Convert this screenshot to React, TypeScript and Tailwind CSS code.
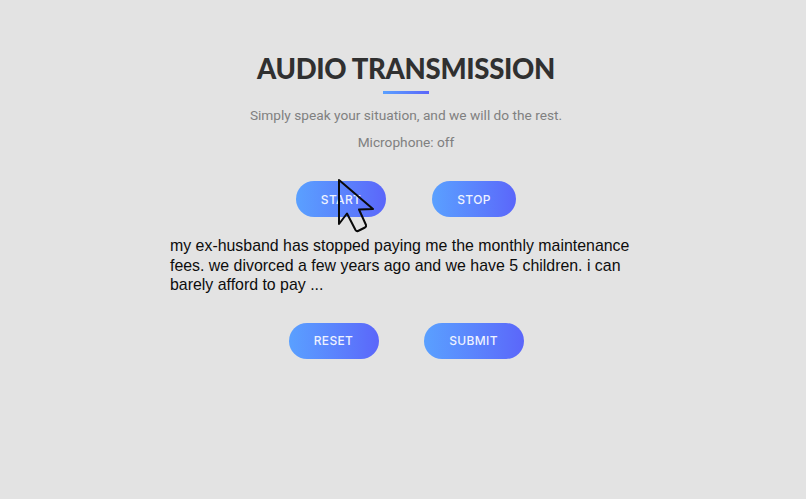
const pill =
  `h-9 pt-px rounded-full bg-gradient-to-r from-[#5aa0ff] to-[#5b66fa] text-[12px] font-medium tracking-[0.03em] text-[#eef2ff] font-['Inter',sans-serif] flex items-center justify-center`

function Cursor() {
  return (
    <svg className="absolute left-[336px] top-[178px]" width="40" height="56" viewBox="0 0 40 56" fill="none">
      <path
        d="M3 2 L3 46 L11 35.5 L19.5 52 Q20.5 53.5 22 53 L29 49.5 Q30.5 48.5 30 47 L23 31.5 L37 31 Z"
        stroke="#0a0a0a"
        strokeWidth="2"
        strokeLinejoin="round"
      />
    </svg>
  )
}

export default function App() {
  return (
    <div className="relative min-h-[499px] w-full overflow-hidden bg-[#e3e3e3] pl-[6px] pt-[53px] font-['Roboto',sans-serif]">
      <div className="flex flex-col items-center">
        <h1 className="text-[27.5px] leading-[32px] font-black tracking-[-0.3px] text-[#303030] font-['Lato',sans-serif]">
          AUDIO TRANSMISSION
        </h1>
        <div className="mt-[6px] h-[3px] w-[46px] bg-gradient-to-r from-[#5aa0ff] to-[#5b66fa]" />
        <p className="mt-[11px] text-[13.7px] leading-[20px] text-[#808080]">
          Simply speak your situation, and we will do the rest.
        </p>
        <p className="mt-[7px] text-[13.7px] leading-[20px] text-[#808080]">Microphone: off</p>

        <div className="mt-[29px] flex gap-[46px]">
          <button className={`${pill} w-[90px]`}>START</button>
          <button className={`${pill} w-[84px]`}>STOP</button>
        </div>

        <p className="mt-[19px] w-[472px] text-[15.9px] leading-[19.5px] text-[#0d0d0d] font-['Liberation_Sans',sans-serif]">
          my ex-husband has stopped paying me the monthly maintenance fees. we divorced a few years ago and we have 5 children. i can barely afford to pay ...
        </p>

        <div className="mt-[28px] flex gap-[45px]">
          <button className={`${pill} w-[90px]`}>RESET</button>
          <button className={`${pill} w-[100px]`}>SUBMIT</button>
        </div>
      </div>
      <Cursor />
    </div>
  )
}
